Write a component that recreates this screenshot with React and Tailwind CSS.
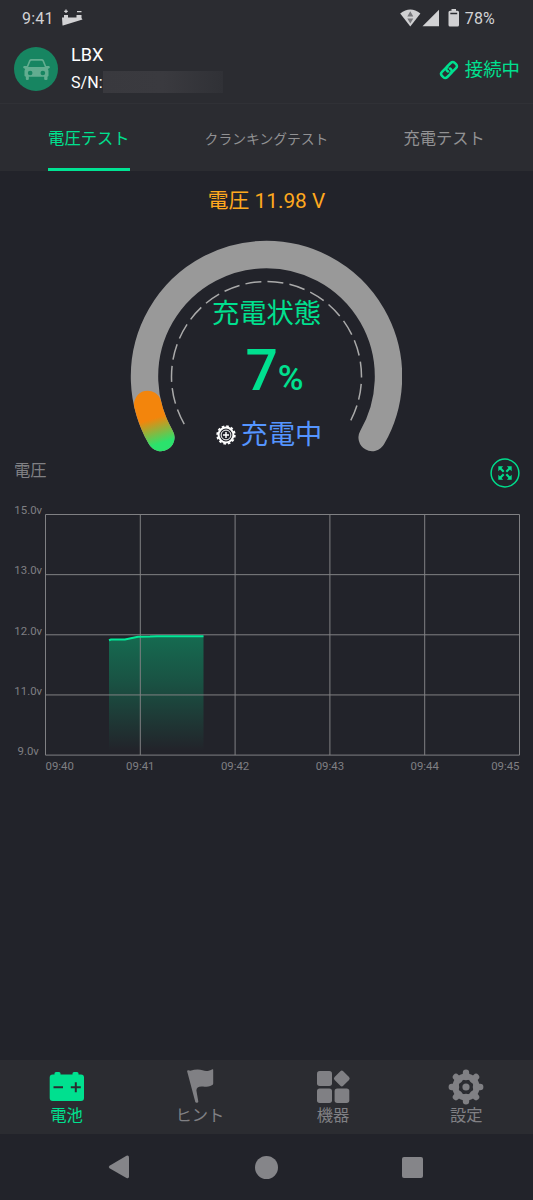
const tabs = [
  { label: '電圧テスト', size: 'text-[16.3px]', active: true },
  { label: 'クランキングテスト', size: 'text-[13.8px]' },
  { label: '充電テスト', size: 'text-[16.3px]' },
];

const navItems = [
  { label: '電池', Icon: BatteryIcon, active: true },
  { label: 'ヒント', Icon: FlagIcon },
  { label: '機器', Icon: DevicesIcon },
  { label: '設定', Icon: SettingsIcon },
];

const yLabels = ['15.0v', '13.0v', '12.0v', '11.0v', '9.0v'];
const xLabels = ['09:40', '09:41', '09:42', '09:43', '09:44', '09:45'];

// point on a circle, angle in degrees clockwise from 3 o'clock
function polar(cx, cy, r, deg) {
  const a = (deg * Math.PI) / 180;
  return [cx + r * Math.cos(a), cy + r * Math.sin(a)];
}

function arc(cx, cy, r, from, to) {
  const [x1, y1] = polar(cx, cy, r, from);
  const [x2, y2] = polar(cx, cy, r, to);
  return `M${x1} ${y1}A${r} ${r} 0 ${to - from > 180 ? 1 : 0} 1 ${x2} ${y2}`;
}

function BatteryIcon() {
  return (
    <svg width="36" height="36" viewBox="0 0 36 36">
      <path d="M5.500 5.500V4.500a1.500 1.500 0 0 1 1.500-1.500h3a1.500 1.500 0 0 1 1.500 1.500V5.500H23.500V4.500a1.500 1.500 0 0 1 1.500-1.500h3a1.500 1.500 0 0 1 1.500 1.500V5.500h2.500a3 3 0 0 1 3 3V29a3 3 0 0 1-3 3H3.700a3 3 0 0 1-3-3V8.500a3 3 0 0 1 3-3Z" fill="currentColor" />
      <path d="M4.500 18.300H14M21.800 18.300H31.800M26.800 13.300V23.300" stroke="#2b2c31" strokeWidth="2" />
    </svg>
  );
}

function FlagIcon() {
  return (
    <svg width="36" height="36" viewBox="0 0 36 36" fill="currentColor">
      <path d="M5.200 2.600C4.900 1.800 5.600 1.200 6.500 1.300L8.300 1.700C13 .3 17.500.2 20.500 1.300C24.500 2.700 27.500 1.700 30.400.2C31 .0 31.200.3 31.200.8V14.200C31.200 15 31 15.500 30.300 15.900C26.500 18 23 17.700 19.500 17.600C16.200 17.600 14.400 18.800 14.400 21.500L16.300 32.500C16.500 33.700 13.700 34.300 13.300 33Z" />
    </svg>
  );
}

function DevicesIcon() {
  return (
    <svg width="36" height="36" viewBox="0 0 36 36" fill="currentColor">
      <rect x="2" y="2" width="15" height="15" rx="2.700" />
      <rect x="2" y="19.400" width="15" height="14.600" rx="2.700" />
      <rect x="19.600" y="19.400" width="14.700" height="14.600" rx="2.700" />
      <rect x="20.700" y="3.400" width="12.200" height="12.200" rx="2" transform="rotate(45 26.800 9.500)" />
    </svg>
  );
}

function SettingsIcon() {
  return (
    <svg width="36" height="36" viewBox="0 0 36 36" stroke="currentColor" fill="none">
      {[0, 45, 90, 135].map((deg) => (
        <path key={deg} d="M18 3.800V8M18 28V32.200" strokeWidth="6.400" strokeLinecap="round" transform={`rotate(${deg} 18 18)`} />
      ))}
      <circle cx="18" cy="18" r="10.600" strokeWidth="6" />
      <circle cx="18" cy="18" r="3.600" fill="currentColor" stroke="none" />
    </svg>
  );
}

function CarIcon() {
  return (
    <svg width="27" height="21" viewBox="0 0 80 63" fill="#62ad90">
      <path
        fillRule="evenodd"
        d="M24 0H56Q60 0 62 4L69 21L77 21Q82 23 79 27L74 30Q76 33 76 37V50Q76 52 73 53V60Q73 63 70 63H67Q63 63 63 60V53H17V60Q17 63 13 63H11Q8 63 8 60V53Q4 52 4 50V37Q4 33 6 30L1 27Q-2 23 3 21H11L18 4Q20 0 24 0ZM25 5Q23 5 22 7L15 24H65L58 7Q57 5 55 5ZM21 35A7 7 0 1 0 21 49A7 7 0 1 0 21 35ZM59 35A7 7 0 1 0 59 49A7 7 0 1 0 59 35Z"
      />
    </svg>
  );
}

function LinkIcon() {
  return (
    <svg width="20" height="20" viewBox="0 0 20 20" fill="none" stroke="currentColor" strokeWidth="2.500" strokeLinecap="round">
      <path d="M9 11.500L8 10.600Q6.200 8.600 8 6.700L11.700 3Q13.700 1 15.700 2.900L17 4.200Q19 6.200 17 8.200L13.300 11.800Q12.500 12.600 11.600 12.700" />
      <path d="M11 8.500L12 9.400Q13.800 11.400 12 13.300L8.300 17Q6.300 19 4.300 17.100L3 15.800Q1 13.800 3 11.800L6.700 8.200Q7.500 7.400 8.400 7.300" />
    </svg>
  );
}

function ChargingIcon() {
  return (
    <svg width="20" height="20" viewBox="0 0 20 20" fill="none" stroke="#fff">
      <circle cx="10" cy="10" r="7.400" strokeWidth="2" />
      <circle cx="10" cy="10" r="8.800" strokeWidth="1.800" strokeDasharray="2.600 2.007" />
      <circle cx="10" cy="10" r="4.900" strokeWidth="1" />
      <path d="M10 7V13M7 10H13" strokeWidth="1.500" />
    </svg>
  );
}

function StatusBar() {
  return (
    <div className="flex h-9 items-center justify-between pl-[22px] pr-[38px] text-[#d2d2d4]">
      <div className="flex items-center gap-[8px]">
        <span className="pt-px text-[16px] leading-9 tracking-[0.2px]">9:41</span>
        <svg width="21" height="18" viewBox="0 0 21 18" fill="currentColor">
          <path d="M0 8.500H2V6H6V8.500H14.500V6H19.500V9L20.500 10.500L1 16.500H.5Z" />
          <path d="M4 .5V4.100M2.200 2.300H5.800M15 2.700H19.500" stroke="currentColor" strokeWidth="1.300" />
        </svg>
      </div>
      <div className="flex items-center">
        <svg width="21" height="18" viewBox="0 0 21 18">
          <path d="M.2 4.500Q10.300-3.500 20.400 4.500L10.300 17.500Z" fill="#d0d0d2" />
          <path d="M7.300 7.500L10.300 2.200L13.300 7.500ZM7.300 9.500H13.300L10.300 14.500Z" fill="#77777b" />
        </svg>
        <svg className="ml-px" width="18" height="18" viewBox="0 0 18 18" fill="currentColor">
          <path d="M17 .7V17.200H.5Z" />
        </svg>
        <svg className="ml-[8px]" width="12" height="18" viewBox="0 0 12 18">
          <path d="M3.500 0H8V1.800H9.500Q11 1.800 11 3.300V16Q11 17.500 9.500 17.500H2Q.5 17.500 .5 16V3.300Q.5 1.800 2 1.800H3.500Z" fill="#d0d0d2" />
          <path d="M2.300 4.500H9.200" stroke="#2b2c31" strokeWidth="1.500" />
        </svg>
        <span className="ml-[5px] pt-px text-[16px] leading-9 tracking-[0.2px]">78%</span>
      </div>
    </div>
  );
}

function Header() {
  return (
    <div className="flex h-[67px] items-center pl-[14px] pr-[13px]">
      <div className="mb-px flex size-11 items-center justify-center rounded-full bg-[#178561]">
        <CarIcon />
      </div>
      <div className="mb-[2px] ml-[13px] flex flex-col">
        <div className="text-[18px] leading-[27px] text-white">LBX</div>
        <div className="flex h-[29px] items-center text-[16px] text-white">
          <span className="w-8 pt-px tracking-[0.1px]">S/N:</span>
          <span className="h-[22px] w-[120px] bg-linear-to-r from-[#39393e] via-[#3a3a3f] to-[#303136]" />
        </div>
      </div>
      <div className="ml-auto flex items-center gap-[6px] text-[#00e08f]">
        <LinkIcon />
        <span className="pt-px text-[18.400px] leading-6">接続中</span>
      </div>
    </div>
  );
}

function Tabs() {
  return (
    <div className="grid h-[68px] grid-cols-3 border-t border-[#303136]">
      {tabs.map((tab) => (
        <div key={tab.label} className="flex justify-center">
          <div className={`flex items-center border-b-[3px] pt-[5px] ${tab.size} ${tab.active ? 'border-[#00e393] text-[#00e08f]' : 'border-transparent text-[#919193]'}`}>
            <span className="leading-6">{tab.label}</span>
          </div>
        </div>
      ))}
    </div>
  );
}

function Gauge({ percent }) {
  const end = 150 + (240 * percent) / 100;
  return (
    <div className="relative ml-[130px] h-[225px] w-[272px]">
      <svg width="272" height="225" viewBox="0 0 272 225" fill="none">
        <defs>
          <linearGradient id="level" gradientUnits="userSpaceOnUse" x1="34" y1="218" x2="25" y2="189">
            <stop offset="0" stopColor="#2be26c" />
            <stop offset="0.150" stopColor="#2be26c" />
            <stop offset="1" stopColor="#f3850c" />
          </linearGradient>
        </defs>
        <path d={arc(136.5, 147.5, 122, 150, 390)} stroke="#999" strokeWidth="27.400" strokeLinecap="round" />
        <path d={arc(136.5, 147.5, 122, 150, end)} stroke="url(#level)" strokeWidth="27.400" strokeLinecap="round" />
        <path d={arc(136.5, 147.5, 95, 150, 390)} stroke="#aaa" strokeWidth="1.500" strokeDasharray="16 6.200" />
      </svg>
      <div className="absolute inset-0 flex flex-col items-center">
        <div className="mt-[65px] ml-px text-[27.300px] leading-10 text-[#00e08f]">充電状態</div>
        <div className="mt-[9px] ml-[17px] flex items-baseline font-medium leading-[56px] text-[#00e08f]">
          <span className="text-[57px]">7</span>
          <span className="text-[35px]">%</span>
        </div>
        <div className="mt-[8px] ml-[6px] flex items-center gap-[5px] text-[27.200px] leading-10 text-[#5595ff]">
          <ChargingIcon />
          <span>充電中</span>
        </div>
      </div>
    </div>
  );
}

function VoltageChart() {
  const left = 45.5;
  const top = 14.5;
  const stepX = 94.8;
  const stepY = 60.15;
  return (
    <svg className="block" width="533" height="284" viewBox="0 0 533 284">
      <defs>
        <linearGradient id="area" x1="0" y1="0" x2="0" y2="1">
          <stop offset="0" stopColor="#00e08f" stopOpacity="0.380" />
          <stop offset="0.400" stopColor="#00e08f" stopOpacity="0.250" />
          <stop offset="1" stopColor="#00e08f" stopOpacity="0" />
        </linearGradient>
      </defs>
      <path d="M109 140L125 139L138 136.500L203.500 136V251H109Z" fill="url(#area)" />
      <g stroke="#808083" strokeWidth="1">
        {yLabels.map((label, i) => (
          <line key={label} x1={left} x2={519.5} y1={top + i * stepY} y2={top + i * stepY} />
        ))}
        {xLabels.map((label, i) => (
          <line key={label} x1={left + i * stepX} x2={left + i * stepX} y1={top} y2={top + 4 * stepY} />
        ))}
      </g>
      <path d="M109 140.300L111 139.500H125L138 136.700L150 136.500L157 136.200H203.500" fill="none" stroke="#00e897" strokeWidth="2" />
      <g fill="#7f7f83" fontSize="11.400">
        {yLabels.map((label, i) => (
          <text key={label} x="28.200" y={14.3 + i * stepY} textAnchor="middle">{label}</text>
        ))}
        {xLabels.map((label, i) => (
          <text
            key={label}
            x={left + i * stepX}
            y="270.300"
            textAnchor={i === 0 ? 'start' : i === xLabels.length - 1 ? 'end' : 'middle'}
          >
            {label}
          </text>
        ))}
      </g>
    </svg>
  );
}

function ExpandButton() {
  return (
    <svg className="mb-[9px]" width="30" height="30" viewBox="0 0 30 30" fill="none" stroke="#00dc8c">
      <circle cx="15" cy="15" r="13.900" strokeWidth="1.500" />
      {[0, 90, 180, 270].map((deg) => (
        <g key={deg} transform={`rotate(${deg} 15 15)`}>
          <path d="M8.300 8.300H13.200L8.300 13.200Z" fill="#00dc8c" stroke="none" />
          <path d="M10 10L13.700 13.700" strokeWidth="2.200" />
        </g>
      ))}
    </svg>
  );
}

function BottomNav() {
  return (
    <div className="grid h-[74px] grid-cols-4 bg-[#2b2c31]">
      {navItems.map(({ label, Icon, active }) => (
        <div key={label} className={`flex flex-col items-center pt-[9px] ${active ? 'text-[#00e08f]' : 'text-[#808084]'}`}>
          <Icon />
          <span className="mt-px text-[16.300px] leading-5">{label}</span>
        </div>
      ))}
    </div>
  );
}

function SystemNav() {
  return (
    <div className="flex h-[66px] items-center justify-between px-[108px] text-[#858589]">
      <svg width="22" height="24" viewBox="0 0 22 24" fill="currentColor">
        <path d="M1.500 10.800L18.500 .8Q21 0 21 2.500V21.500Q21 24 18.500 23L1.500 13.200Q0 12 1.500 10.800Z" />
      </svg>
      <div className="size-[23px] rounded-full bg-current" />
      <div className="mr-[2px] size-[21px] rounded-[2px] bg-current" />
    </div>
  );
}

export default function App() {
  return (
    <div className="flex h-[1200px] w-[533px] flex-col overflow-hidden bg-[#22232a] font-['Roboto','Noto_Sans_CJK_JP',sans-serif]">
      <div className="bg-[#2b2c31]">
        <StatusBar />
        <Header />
        <Tabs />
      </div>
      <main className="flex flex-1 flex-col">
        <div className="mt-[15px] text-center text-[20.800px] leading-[30px] text-[#ffa91e]">電圧 11.98 V</div>
        <div className="mt-[13px]">
          <Gauge percent={7} />
        </div>
        <div className="flex h-[46px] items-center justify-between pl-[14px] pr-[13px]">
          <span className="mb-[13px] text-[16.300px] leading-6 text-[#808084]">電圧</span>
          <ExpandButton />
        </div>
        <VoltageChart />
      </main>
      <BottomNav />
      <SystemNav />
    </div>
  );
}
